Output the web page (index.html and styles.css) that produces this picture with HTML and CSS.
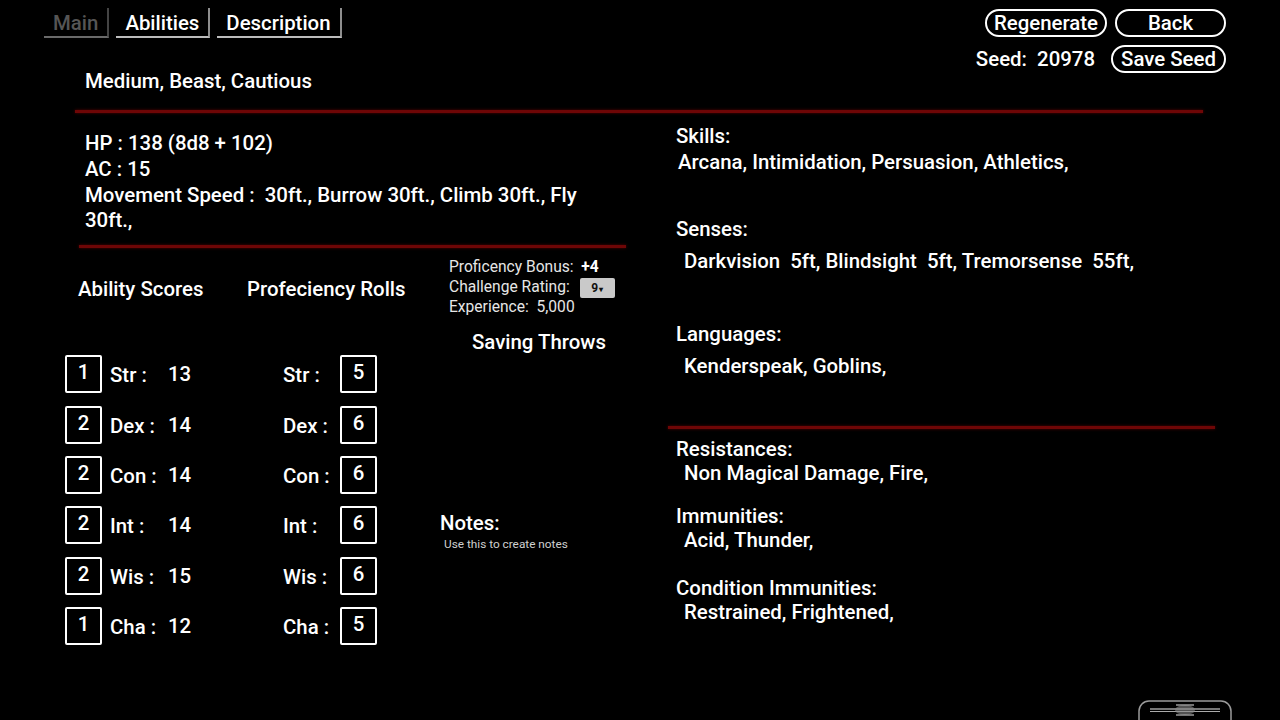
FILE: index.html
```html
<!DOCTYPE html>
<html>
<head>
  <meta charset="UTF-8">
  <title>Monster Generator</title>
  <link rel="stylesheet" href="styles.css">
</head>
<body>
  <div class="header">
    <div class="header-left">
      <div class="tabs">
        <div class="tab active">Main</div>
        <div class="tab">Abilities</div>
        <div class="tab">Description</div>
      </div>
      <div class="kind">Medium, Beast, Cautious</div>
    </div>

    <div class="controls">
      <div class="control-row">
        <button class="pill btn-regen">Regenerate</button>
        <button class="pill btn-back">Back</button>
      </div>
      <div class="control-row seed-row">
        <span class="seed">Seed:&nbsp; 20978</span>
        <button class="pill btn-save">Save Seed</button>
      </div>
    </div>
  </div>

  <div class="divider divider-full"></div>

  <div class="main">
    <div class="left">
      <div class="stats">
        <div>HP : 138 (8d8 + 102)</div>
        <div>AC : 15</div>
        <div>Movement Speed :&nbsp; 30ft., Burrow 30ft., Climb 30ft., Fly 30ft.,</div>
      </div>

      <div class="divider divider-left"></div>

      <div class="lower">
        <div class="col col-abilities">
          <div class="col-title">Ability Scores</div>
          <div class="rows">
            <div class="row"><div class="box">1</div><span class="label">Str :</span><span>13</span></div>
            <div class="row"><div class="box">2</div><span class="label">Dex :</span><span>14</span></div>
            <div class="row"><div class="box">2</div><span class="label">Con :</span><span>14</span></div>
            <div class="row"><div class="box">2</div><span class="label">Int :</span><span>14</span></div>
            <div class="row"><div class="box">2</div><span class="label">Wis :</span><span>15</span></div>
            <div class="row"><div class="box">1</div><span class="label">Cha :</span><span>12</span></div>
          </div>
        </div>

        <div class="col col-rolls">
          <div class="col-title">Profeciency Rolls</div>
          <div class="rows rows-rolls">
            <div class="row"><span class="label">Str :</span><div class="box">5</div></div>
            <div class="row"><span class="label">Dex :</span><div class="box">6</div></div>
            <div class="row"><span class="label">Con :</span><div class="box">6</div></div>
            <div class="row"><span class="label">Int :</span><div class="box">6</div></div>
            <div class="row"><span class="label">Wis :</span><div class="box">6</div></div>
            <div class="row"><span class="label">Cha :</span><div class="box">5</div></div>
          </div>
        </div>

        <div class="col col-side">
          <div class="info">
            <div>Proficency Bonus:&nbsp; <b>+4</b></div>
            <div class="cr-line">Challenge Rating:&nbsp;<span class="dropdown">9<span class="caret">&#9662;</span></span></div>
            <div>Experience:&nbsp; 5,000</div>
          </div>
          <div class="saving">Saving Throws</div>
          <div class="notes">
            <div class="notes-title">Notes:</div>
            <div class="notes-hint">Use this to create notes</div>
          </div>
        </div>
      </div>
    </div>

    <div class="right">
      <div class="trait trait-skills">
        <div class="trait-title">Skills:</div>
        <div class="trait-list flush">Arcana, Intimidation, Persuasion, Athletics,</div>
      </div>
      <div class="trait trait-gap">
        <div class="trait-title">Senses:</div>
        <div class="trait-list spaced">Darkvision&nbsp; 5ft, Blindsight&nbsp; 5ft, Tremorsense&nbsp; 55ft,</div>
      </div>
      <div class="trait trait-gap">
        <div class="trait-title">Languages:</div>
        <div class="trait-list spaced">Kenderspeak, Goblins,</div>
      </div>

      <div class="divider divider-right"></div>

      <div class="trait trait-res">
        <div class="trait-title">Resistances:</div>
        <div class="trait-list">Non Magical Damage, Fire,</div>
      </div>
      <div class="trait trait-imm">
        <div class="trait-title">Immunities:</div>
        <div class="trait-list">Acid, Thunder,</div>
      </div>
      <div class="trait trait-cond">
        <div class="trait-title">Condition Immunities:</div>
        <div class="trait-list">Restrained, Frightened,</div>
      </div>
    </div>
  </div>

  <!-- drag handle in the bottom corner -->
  <svg class="handle" width="96" height="24" viewBox="0 0 96 24">
    <rect x="1" y="1" width="92" height="30" rx="10" fill="none" stroke="#9a9a9a" stroke-width="1.5"/>
    <line x1="12" y1="9" x2="82" y2="9" stroke="#777" stroke-width="2"/>
    <line x1="12" y1="11.5" x2="82" y2="11.5" stroke="#aaa" stroke-width="1"/>
    <ellipse cx="47" cy="10" rx="10" ry="5" fill="#888" opacity="0.6"/>
    <line x1="38" y1="5" x2="56" y2="5" stroke="#999" stroke-width="1.5"/>
    <line x1="38" y1="15" x2="56" y2="15" stroke="#999" stroke-width="1.5"/>
  </svg>
</body>
</html>
```

FILE: styles.css
```css
body {
  margin: 0;
  width: 1280px;
  height: 720px;
  overflow: hidden;
  position: relative;
  background-color: #000;
  color: #fff;
  font-family: Roboto, "Noto Sans", sans-serif;
  font-weight: 500;
  font-size: 20.4px;
  line-height: 24px;
}

/* header: tabs + controls */
.header {
  display: flex;
  justify-content: space-between;
  padding: 8px 54px 0 44px;
}
.tabs {
  display: flex;
  gap: 7px;
}
.tab {
  height: 28px;
  line-height: 30px;
  padding: 0 9px;
  border-bottom: 2px solid #bdbdbd;
  border-right: 2px solid #8e8e8e;
}
.tab.active {
  color: #555;
  border-bottom-color: #6a6a6a;
  border-right-color: #444;
}
.kind {
  margin-top: 31px;
  margin-left: 41px;
}

.controls {
  display: flex;
  flex-direction: column;
  align-items: flex-end;
  padding-top: 1px;
}
.control-row {
  display: flex;
  align-items: center;
  gap: 8px;
}
.seed-row {
  margin-top: 8px;
  gap: 16px;
}
.pill {
  height: 28px;
  padding: 0;
  background: none;
  color: #fff;
  border: 2px solid #fff;
  border-radius: 14px;
  font-family: inherit;
  font-weight: 500;
  font-size: 20.4px;
  line-height: 24px;
}
.btn-regen { width: 122px; }
.btn-back { width: 111px; }
.btn-save { width: 115px; }

/* red separators */
.divider {
  height: 3px;
  background-color: #6e0606;
  box-shadow: 0 0 3px #5a0000;
}
.divider-full {
  margin: 17px 0 0 75px;
  width: 1128px;
}
.divider-left {
  margin: 11px 0 0 14px;
  width: 547px;
}
.divider-right {
  margin-top: 48px;
  width: 547px;
}

.main {
  display: grid;
  grid-template-columns: 603px 547px;
  padding-left: 65px;
}

/* left column */
.stats {
  margin: 18px 0 0 20px;
  width: 510px;
  line-height: 25.8px;
}
.lower {
  display: flex;
  padding-top: 10px;
}
.col-abilities { width: 175px; }
.col-rolls { width: 200px; }
.col-side { width: 190px; }
.col-title {
  margin-top: 19px;
}
.col-abilities .col-title { padding-left: 13px; }
.col-rolls .col-title { padding-left: 7px; }

.rows {
  display: flex;
  flex-direction: column;
  gap: 12.4px;
  margin-top: 54px;
}
.rows-rolls {
  padding-left: 43px;
}
.row {
  display: flex;
  align-items: center;
  height: 38px;
}
.box {
  box-sizing: border-box;
  width: 37px;
  height: 38px;
  border: 2px solid #fff;
  border-radius: 2px;
  display: flex;
  align-items: center;
  justify-content: center;
  padding-bottom: 4px;
}
.row .label,
.row .box + span {
  padding-top: 2px;
}
.col-abilities .box { margin-right: 8px; }
.col-abilities .label { width: 58px; }
.rows-rolls .label { width: 57px; }

.info {
  padding-left: 9px;
  font-size: 15.6px;
  font-weight: 400;
  line-height: 19.5px;
  color: #e6e6e6;
}
.info b {
  font-weight: 700;
  color: #fff;
}
.dropdown {
  display: inline-block;
  width: 35px;
  height: 20px;
  margin-left: 6px;
  vertical-align: middle;
  background-color: #c9c9c9;
  border-radius: 2px;
  color: #111;
  font-size: 12px;
  font-weight: 700;
  line-height: 20px;
  text-align: center;
}
.caret {
  font-size: 8px;
  margin-left: 1px;
}
.saving {
  margin-top: 13px;
  padding-left: 32px;
}
.notes {
  margin-top: 157px;
}
.notes-hint {
  padding-left: 4px;
  font-size: 11.8px;
  font-weight: 400;
  line-height: 18px;
  color: #cfcfcf;
}

/* right column */
.right {
  padding-top: 11px;
}
.trait-title {
  padding-left: 8px;
}
.trait-list {
  padding-left: 16px;
}
.trait-list.flush {
  padding-left: 10px;
  margin-top: 2px;
}
.trait-list.spaced {
  margin-top: 8px;
}
.trait-gap {
  margin-top: 43px;
}
.trait-gap + .trait-gap {
  margin-top: 49px;
}
.trait-res {
  margin-top: 8px;
}
.trait-imm {
  margin-top: 19px;
}
.trait-cond {
  margin-top: 24px;
}

.handle {
  position: absolute;
  left: 1138px;
  top: 700px;
}
```
